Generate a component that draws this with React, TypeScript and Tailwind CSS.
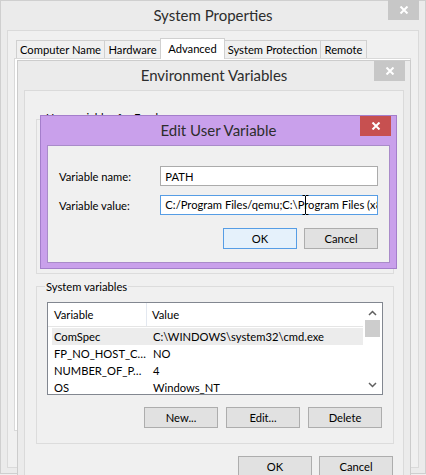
import React from 'react';

const CloseBtn = ({ red }: { red?: boolean }) => (
  <div
    className={`flex h-[20px] w-[31px] items-center justify-center ${
      red ? 'bg-[#c75050]' : 'bg-[#c7c7c7]'
    }`}
  >
    <svg width="10" height="8" viewBox="0 0 10 8">
      <path d="M1.5 0.5 L8.5 7.5 M8.5 0.5 L1.5 7.5" stroke="white" strokeWidth="2" />
    </svg>
  </div>
);

const Btn = ({ label, primary }: { label: string; primary?: boolean }) => (
  <div
    className={`flex h-[21px] w-[74px] items-center justify-center border bg-[#e1e1e1] ${
      primary ? 'border-[#569de5] bg-[#e5f1fb]' : 'border-[#adadad]'
    }`}
  >
    {label}
  </div>
);

const tabs = [
  { name: 'Computer Name', w: 'w-[89px]' },
  { name: 'Hardware', w: 'w-[57px]' },
  { name: 'Advanced', w: 'w-[65px]', active: true },
  { name: 'System Protection', w: 'w-[97px]' },
  { name: 'Remote', w: 'w-[47px]' },
];

const sysVars = [
  ['ComSpec', 'C:\\WINDOWS\\system32\\cmd.exe'],
  ['FP_NO_HOST_C…', 'NO'],
  ['NUMBER_OF_P…', '4'],
  ['OS', 'Windows_NT'],
];

export default function App() {
  return (
    <div className="relative h-[475px] w-[426px] overflow-hidden bg-[#f0f0f0] font-[Lato,sans-serif] text-[11.2px] leading-[15px] text-black">
      {/* System Properties */}
      <div className="absolute left-0 top-0 flex h-[474px] w-[426px] flex-col border border-[#cfcfcf] bg-[#ebebeb]">
        <div className="relative flex h-[29px] items-center justify-center text-[15px] text-[#2d2d2d]">
          System Properties
          <div className="absolute right-[6px] top-[-1px]">
            <CloseBtn />
          </div>
        </div>
        <div className="mx-[6px] mb-[5px] flex flex-1 flex-col border border-[#dadada] bg-[#f0f0f0] px-[6px] pt-[7px]">
          <div className="flex h-[20px] items-end pl-[2px]">
            {tabs.map((t, i) => (
              <div
                key={t.name}
                className={`flex items-center justify-center whitespace-nowrap border border-b-0 ${t.w} ${
                  i > 0 ? '-ml-px' : ''
                } ${
                  t.active
                    ? 'relative z-10 -mb-px h-[21px] border-[#d0d0d0] bg-white pb-[2px]'
                    : 'h-[18px] border-[#d0d0d0] bg-[#f0f0f0]'
                }`}
              >
                {t.name}
              </div>
            ))}
          </div>
          <div className="h-[373px] w-[397px] border border-[#d9d9d9] bg-white" />
        </div>
      </div>

      {/* Environment Variables */}
      <div className="absolute left-[17px] top-[60px] flex h-[430px] w-[394px] flex-col border border-[#cccccc] bg-[#ebebeb]">
        <div className="relative flex h-[29px] items-center justify-center text-[15px] text-[#2d2d2d]">
          Environment Variables
          <div className="absolute right-[5px] top-0">
            <CloseBtn />
          </div>
        </div>
        <div className="mx-[6px] flex-1 border border-[#dadada] bg-[#f0f0f0]">
          <div className="relative ml-[11px] mt-[28px] h-[155px] w-[358px] border border-[#dcdcdc]">
            <span className="absolute left-[8px] top-[-10px] bg-[#f0f0f0] px-[1px]">
              User variables for Frank
            </span>
          </div>

          <div className="relative ml-[11px] mt-[12px] w-[358px] border border-[#dcdcdc] px-[10px] pb-[15px] pt-[15px]">
            <span className="absolute left-[8px] top-[-8px] bg-[#f0f0f0] px-[1px]">
              System variables
            </span>
            <div className="flex h-[93px] border border-[#828790] bg-white">
              <div className="flex-1">
                <div className="flex h-[24px] items-center border-b border-[#e5e5e5]">
                  <div className="flex h-full w-[99px] items-center border-r border-[#e3e8f0] pl-[6px]">
                    Variable
                  </div>
                  <div className="pl-[5px]">Value</div>
                </div>
                <div className="mt-px">
                  {sysVars.map(([k, v], i) => (
                    <div
                      key={k}
                      className={`ml-[4px] flex h-[17px] items-center whitespace-nowrap ${
                        i === 0 ? 'bg-[#ececec]' : ''
                      }`}
                    >
                      <div className="w-[99px] pl-[2px]">{k}</div>
                      <div className="pl-[2px]">{v}</div>
                    </div>
                  ))}
                </div>
              </div>
              <div className="flex w-[19px] flex-col items-center bg-white">
                <svg className="mt-[7px]" width="9" height="6" viewBox="0 0 9 6">
                  <path d="M1 5 L4.5 1.5 L8 5" fill="none" stroke="#606060" strokeWidth="1.5" />
                </svg>
                <div className="mt-[4px] h-[17px] w-[15px] bg-[#cdcdcd]" />
                <div className="flex-1" />
                <svg className="mb-[6px]" width="9" height="6" viewBox="0 0 9 6">
                  <path d="M1 1 L4.5 4.5 L8 1" fill="none" stroke="#606060" strokeWidth="1.5" />
                </svg>
              </div>
            </div>
            <div className="mt-[12px] flex justify-end gap-[8px] pr-px">
              <Btn label="New..." />
              <Btn label="Edit..." />
              <Btn label="Delete" />
            </div>
          </div>

          <div className="mt-[12px] flex justify-end gap-[7px] pr-[10px]">
            <Btn label="OK" />
            <Btn label="Cancel" />
          </div>
        </div>
      </div>

      {/* Edit User Variable */}
      <div className="absolute left-[40px] top-[115px] flex h-[154px] w-[357px] flex-col border border-[#a47ecb] bg-[#c9a0eb]">
        <div className="relative flex h-[29px] items-center justify-center text-[15px] text-[#2d2d2d]">
          Edit User Variable
          <div className="absolute right-[5px] top-0">
            <CloseBtn red />
          </div>
        </div>
        <div className="mx-[6px] mb-[5px] flex-1 border border-[#a98bc9] bg-[#f0f0f0] pl-[11px] pr-[11px] pt-[20px]">
          <div className="flex items-center">
            <div className="w-[102px]">Variable name:</div>
            <div className="flex h-[20px] w-[219px] items-center border border-[#ababab] bg-white pl-[4px]">
              PATH
            </div>
          </div>
          <div className="mt-[9px] flex items-center">
            <div className="w-[102px]">Variable value:</div>
            <div className="h-[20px] w-[219px] overflow-hidden border border-[#569de5] bg-white pl-[4px]">
              <div className="whitespace-nowrap leading-[18px]">
                C:/Program Files/qemu;C:\Program Files (x86)\Intel
              </div>
            </div>
          </div>
          <div className="mt-[13px] flex justify-end gap-[7px]">
            <Btn label="OK" primary />
            <Btn label="Cancel" />
          </div>
        </div>
      </div>

      {/* mouse I-beam cursor */}
      <svg className="absolute left-[302px] top-[195px]" width="7" height="20" viewBox="0 0 7 20">
        <path d="M0.5 0.5 H3 M4 0.5 H6.5 M3.5 1 V19 M0.5 19.5 H3 M4 19.5 H6.5" stroke="#000" strokeWidth="1" fill="none" />
      </svg>
    </div>
  );
}
